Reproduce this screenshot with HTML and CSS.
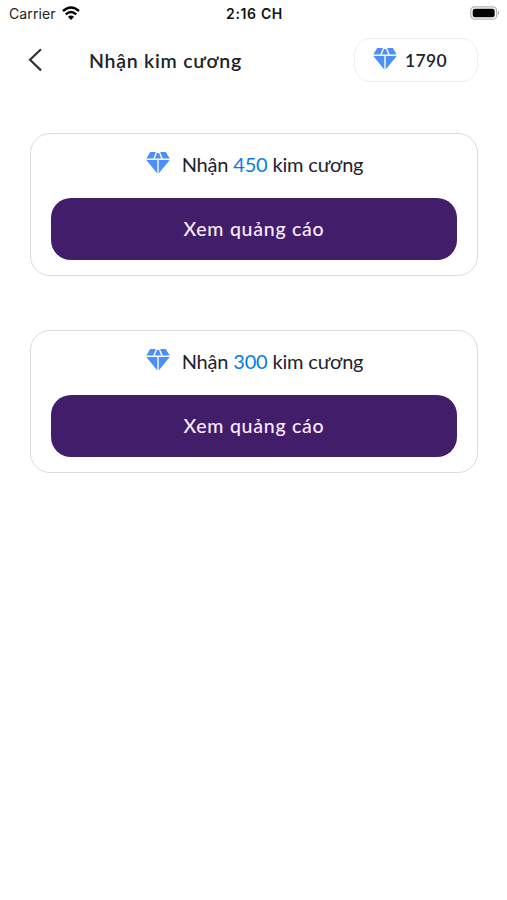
FILE: index.html
```html
<!DOCTYPE html>
<html lang="vi">
<head>
<meta charset="utf-8">
<title>Nhận kim cương</title>
<link rel="stylesheet" href="styles.css">
</head>
<body>
<svg width="0" height="0" class="defs">
  <symbol id="gem" viewBox="0 0 24 22">
    <path d="M4.2 0H9.9L7.3 6.4H0.3ZM14.1 0H19.8L23.7 6.4H16.7ZM11 0.9H13L15.2 6.4H8.8ZM0.3 8.1H11.3V21.6ZM12.7 8.1H23.7L12.7 21.6Z"/>
  </symbol>
</svg>
<div class="status">
  <div class="carrier"><span>Carrier</span>
    <svg class="wifi" width="18" height="14" viewBox="0 0 18 14"><path d="M1 5Q9-2 17 5M3.8 8.3Q9 3.8 14.2 8.3" fill="none" stroke="#000" stroke-width="2.4"/><path d="M9 14L5.9 10.7Q9 8.3 12.1 10.7Z"/></svg>
  </div>
  <div class="time">2:16 CH</div>
  <svg class="battery" width="30" height="14" viewBox="0 0 30 14"><rect x=".8" y=".8" width="25.9" height="12.4" rx="4" fill="#fff" stroke="#b5b5b5" stroke-width="1.3"/><rect x="2.7" y="2.7" width="22" height="8.6" rx="2.2"/><path d="M28 4.8Q30.3 7 28 9.2Z" fill="#aaa"/></svg>
</div>
<header class="header">
  <svg class="back" width="16" height="24" viewBox="0 0 16 24"><path d="M14 1.2L3 11.8L14 22.4" fill="none" stroke="#303236" stroke-width="2.2"/></svg>
  <h1 class="title">Nhận kim cương</h1>
  <div class="balance"><svg class="gem"><use href="#gem"/></svg><span>1790</span></div>
</header>
<main class="cards">
  <section class="card">
    <div class="reward"><svg class="gem"><use href="#gem"/></svg><p class="label">Nhận <span class="amount">450</span> kim cương</p></div>
    <button class="watch">Xem quảng cáo</button>
  </section>
  <section class="card">
    <div class="reward"><svg class="gem"><use href="#gem"/></svg><p class="label">Nhận <span class="amount">300</span> kim cương</p></div>
    <button class="watch">Xem quảng cáo</button>
  </section>
</main>
</body>
</html>
```
FILE: styles.css
```css
* { box-sizing: border-box; margin: 0; }
body { width: 507px; height: 900px; background: #fff; font-family: Lato, sans-serif; color: #20222d; overflow: hidden; }
.defs { display: block; }
.status { display: grid; grid-template-columns: 1fr auto 1fr; align-items: center; height: 27px; padding: 0 7px 0 9px; font-family: Inter, sans-serif; font-size: 14px; color: #222; }
.carrier { display: flex; align-items: center; gap: 6px; letter-spacing: .1px; }
.wifi { margin-bottom: 1px; }
.time { font-weight: 600; color: #111; letter-spacing: .65px; }
.battery { justify-self: end; margin-bottom: 1px; }
.header { display: flex; align-items: center; height: 66px; padding: 0 29px 0 27px; }
.back { flex: none; }
.title { margin: 1px 0 0 46px; font-size: 19.5px; line-height: 28px; font-weight: 600; letter-spacing: .75px; white-space: nowrap; }
.balance { display: flex; align-items: center; gap: 8px; width: 124px; height: 44px; margin-left: auto; padding-left: 18px; border: 1.5px solid #ededee; border-radius: 16px; font-size: 17.5px; font-weight: 600; letter-spacing: .35px; }
.gem { width: 24px; height: 22px; fill: #4a8ffb; flex: none; }
.balance .gem { margin-bottom: 3px; }
.cards { display: flex; flex-direction: column; gap: 54px; padding: 40px 29px 0 30px; }
.card { height: 143px; padding: 18px 20px 15px; border: 1px solid #d9dbdd; border-radius: 20px; }
.reward { display: flex; justify-content: center; height: 45.5px; gap: 12px; padding-left: 1px; }
.label { margin-top: -1px; font-size: 20px; line-height: 27px; letter-spacing: -.18px; white-space: nowrap; }
.amount { color: #087bed; }
.watch { display: block; width: 100%; height: 62.5px; padding: 0; border: 0; border-radius: 20px; background: #421d6a; color: #f8edff; font: 500 19.5px Lato, sans-serif; letter-spacing: .75px; }
```
